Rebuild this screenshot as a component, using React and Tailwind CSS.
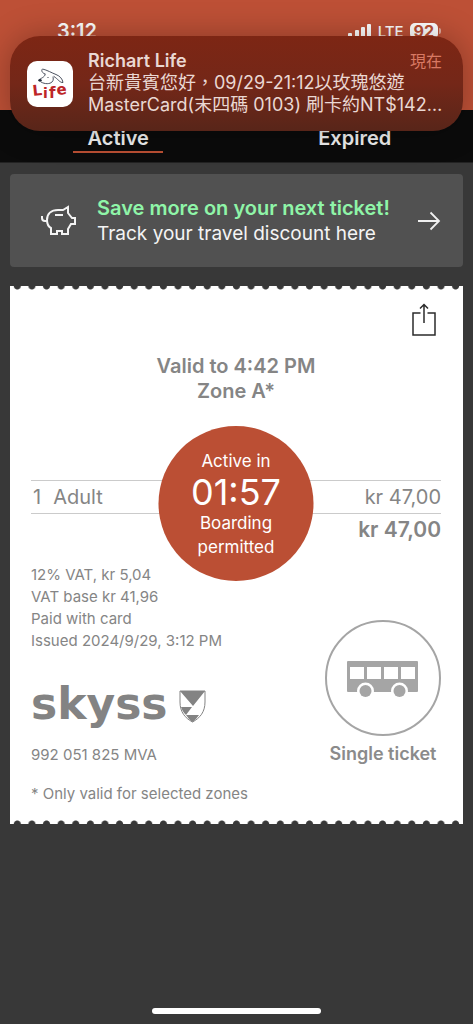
import React from "react";

function StatusBar() {
  return (
    <div className="flex h-full items-start justify-between pt-[21px] pr-[32px] pl-[57px] text-white">
      <span className="text-[20px] leading-[20px] font-semibold">3:12</span>
      <div className="flex items-start gap-[6px]">
        <svg className="mt-[3px]" width="24" height="15" viewBox="0 0 24 15" fill="currentColor" aria-hidden="true">
          <rect x="0" y="9" width="4" height="6" rx="1" />
          <rect x="7" y="6" width="4" height="9" rx="1" />
          <rect x="13" y="3" width="4" height="12" rx="1" />
          <rect x="19" y="0" width="4" height="15" rx="1" />
        </svg>
        <span className="text-[15px] leading-[22px] font-medium">LTE</span>
        <div className="flex items-center gap-px">
          <span className="mt-[2px] rounded-[5px] bg-white px-[4px] text-[16px] leading-[16px] font-bold text-[#bb4f34]">92</span>
          <span className="mt-[2px] h-[6px] w-[2px] rounded-r bg-white/50" />
        </div>
      </div>
    </div>
  );
}

function RichartIcon() {
  return (
    <svg width="46" height="46" viewBox="0 0 46 46" className="shrink-0" role="img" aria-label="Richart Life">
      <rect width="46" height="46" rx="10" fill="#fff" />
      <g fill="none" stroke="#39404f" strokeWidth="0.9" strokeLinecap="round" strokeLinejoin="round">
        <path d="M18 13 C15 12 14 9.500 15.500 8 C20 9 25 12 29 13.500 C33 15 35.500 18 36 21.500 C33 22 31 18 27 15.500" />
        <path d="M18 13 C19 15 15 17 13 18" />
        <path d="M14 21 C18 23.500 23 23 25 21 C27 19 26 17 26 16" />
      </g>
      <circle cx="21" cy="16.500" r="0.600" fill="#222b3a" />
      <ellipse cx="13" cy="19.300" rx="1.700" ry="1.400" fill="#222b3a" />
      <g fill="#bd2528" fontFamily="'DejaVu Sans', sans-serif" fontWeight="700">
        <text x="6" y="35" fontSize="15" transform="rotate(-6 6 35)">L</text>
        <text x="16" y="37" fontSize="14">i</text>
        <text x="22" y="37" fontSize="15">f</text>
        <text x="30" y="34" fontSize="15" transform="rotate(-6 30 34)">e</text>
      </g>
    </svg>
  );
}

function Notification() {
  return (
    <section
      aria-label="Notification"
      className="absolute inset-x-[10px] top-[36px] flex h-[95px] items-center gap-[15px] rounded-[30px] bg-linear-to-b from-[#7d2614] via-[#742718] to-[#582519] pr-[21px] pl-[17px] shadow-[0_0_32px_rgba(0,0,0,0.28)]"
    >
      <RichartIcon />
      <div className="min-w-0 flex-1 pb-[2px] text-[#ead8d3]">
        <div className="flex items-center justify-between leading-[22px]">
          <h2 className="text-[18px] font-semibold">Richart Life</h2>
          <span className="text-[16px] text-[#d87963]">現在</span>
        </div>
        <p className="text-[18px] leading-[22px] whitespace-nowrap">台新貴賓您好，09/29-21:12以玫瑰悠遊</p>
        <p className="text-[18px] leading-[22px] whitespace-nowrap">MasterCard(末四碼 0103) 刷卡約NT$142…</p>
      </div>
    </section>
  );
}

function Tabs() {
  return (
    <nav className="grid h-[53px] grid-cols-2 border-b border-[#222] bg-[#0b0b0b] text-[20px] leading-[24px] font-semibold text-[#f1f1f1]">
      <button className="flex flex-col items-center pt-[16px]">
        Active
        <span className="mt-px h-[2px] w-[90px] bg-[#b94e33]" />
      </button>
      <button className="flex flex-col items-center pt-[16px]">Expired</button>
    </nav>
  );
}

function PiggyBank() {
  return (
    <svg width="36" height="32" viewBox="0 0 36 32" fill="none" stroke="#f4f4f4" strokeWidth="2" strokeLinejoin="miter" aria-hidden="true">
      <path d="M1 11 V13 Q1 16 4 16 H6" />
      <path d="M22 5 H17 C10 5 6 9 6 15 C6 19 8 22 10 23 V29 H16 V26 H21 V29 H27 V24 L30 19 H34 V13 H31 L27 8 V2 L22 5 Z" />
      <path d="M14 10 H22" />
    </svg>
  );
}

function DiscountBanner() {
  return (
    <a href="#discount" className="mx-[10px] mt-[11px] flex h-[93px] items-center rounded-[4px] bg-[#515151] pr-[22px] pl-[31px]">
      <PiggyBank />
      <div className="ml-[20px] flex-1 leading-[25px] whitespace-nowrap">
        <div className="text-[20px] font-semibold text-[#8ff5a8]">Save more on your next ticket!</div>
        <div className="text-[19px] text-[#f4f4f4]">Track your travel discount here</div>
      </div>
      <svg width="24" height="20" viewBox="0 0 24 20" fill="none" stroke="#f0f0f0" strokeWidth="1.800" aria-hidden="true">
        <path d="M1 10 H22 M13.500 1.500 L22 10 L13.500 18.500" />
      </svg>
    </a>
  );
}

function ShareIcon() {
  return (
    <svg width="24" height="34" viewBox="0 0 24 34" fill="none" stroke="#2b2b2b" strokeWidth="1.500" aria-hidden="true">
      <path d="M8.500 10 H1 V32 H23 V10 H15.500" />
      <path d="M12 20 V1.500 M8 5.500 L12 1.500 L16 5.500" />
    </svg>
  );
}

function Countdown() {
  return (
    <div className="absolute top-[-54px] left-1/2 flex size-[155px] -translate-x-1/2 flex-col items-center justify-center rounded-full bg-[#bb4f34] text-center text-[17px] leading-[24px] text-white">
      <span>Active in</span>
      <span className="text-[36px] leading-[38px]">01:57</span>
      <span>Boarding</span>
      <span>permitted</span>
    </div>
  );
}

function FareTable() {
  return (
    <div className="relative mt-[76px]">
      <table className="w-full text-[20px] leading-[32px] text-[#858585]">
        <tbody>
          <tr className="border-y border-[#cbcbcb]">
            <td className="pl-[2px]">
              <span className="mr-[12px]">1</span>Adult
            </td>
            <td className="text-right">kr 47,00</td>
          </tr>
          <tr className="font-semibold">
            <td />
            <td className="text-right text-[21px]">kr 47,00</td>
          </tr>
        </tbody>
      </table>
      <Countdown />
    </div>
  );
}

function SkyssLogo() {
  return (
    <div className="flex items-center gap-[11px] text-[#838383]">
      <span className="font-['DejaVu_Sans',sans-serif] text-[44px] leading-[52px] font-bold">skyss</span>
      <svg className="mt-[5px]" width="27" height="33" viewBox="0 0 27 33" aria-hidden="true">
        <path d="M1 1 H26 V12 C26 22 21 28 13.500 32 C6 28 1 22 1 12 Z" fill="#fff" stroke="currentColor" strokeWidth="1" />
        <path d="M1 1 H26 L14 16 Z M2 17 H13 L7 25 C4 22 3 20 2 17 Z M7 25 H20 C18 28 16 30 13.500 32 C11 30 9 28 7 25 Z" fill="currentColor" />
      </svg>
    </div>
  );
}

function BusBadge() {
  return (
    <div className="flex w-[116px] flex-col items-center pt-[56px]">
      <div className="flex size-[116px] items-center justify-center rounded-full border-2 border-[#a5a5a5]">
        <svg className="mt-[4px]" width="72" height="38" viewBox="0 0 72 38" aria-hidden="true">
          <path d="M1 0 H70 Q71 0 71 1 V30 Q71 31 70 31 H1 Q0 31 0 30 V1 Q0 0 1 0 Z" fill="#a5a5a5" />
          <path d="M3 6 H17 V18 H3 Z M20 6 H34 V18 H20 Z M37 6 H51 V18 H37 Z M54 6 H68 V18 H54 Z" fill="#fff" />
          <circle cx="18.500" cy="30" r="8.500" fill="#fff" />
          <circle cx="52.500" cy="30" r="8.500" fill="#fff" />
          <circle cx="18.500" cy="30" r="6" fill="#a5a5a5" />
          <circle cx="52.500" cy="30" r="6" fill="#a5a5a5" />
        </svg>
      </div>
      <span className="mt-[7px] text-[18px] leading-[22px] font-semibold whitespace-nowrap text-[#8b8b8b]">Single ticket</span>
    </div>
  );
}

function Ticket() {
  return (
    <article className="mx-[10px] mt-[19px] bg-white">
      <div className="h-[4px] bg-[radial-gradient(circle_at_50%_0,#383838_3px,transparent_4px)] bg-[length:calc(100%/31)_100%]" />
      <div className="pt-[13px] pr-[22px] pb-[15px] pl-[21px]">
        <div className="flex justify-end pr-[5px]">
          <button aria-label="Share ticket">
            <ShareIcon />
          </button>
        </div>
        <h1 className="mt-[17px] text-center text-[20px] leading-[25px] font-semibold text-[#858585]">
          Valid to 4:42 PM
          <br />
          Zone A*
        </h1>
        <FareTable />
        <div className="mt-[18px] flex justify-between text-[15px] leading-[22px] text-[#858585]">
          <div>
            <p>12% VAT, kr 5,04</p>
            <p>VAT base kr 41,96</p>
            <p>Paid with card</p>
            <p className="mb-[26px]">Issued 2024/9/29, 3:12 PM</p>
            <SkyssLogo />
            <p className="mt-[14px]">992 051 825 MVA</p>
            <p className="mt-[17px]">* Only valid for selected zones</p>
          </div>
          <BusBadge />
        </div>
      </div>
      <div className="h-[4px] bg-[radial-gradient(circle_at_50%_100%,#383838_3px,transparent_4px)] bg-[length:calc(100%/31)_100%]" />
    </article>
  );
}

export default function App() {
  return (
    <div className="relative flex min-h-screen flex-col bg-[#383838] font-[Inter,'Noto_Sans_CJK_TC',sans-serif]">
      <header className="h-[110px] bg-[#bd5036]">
        <StatusBar />
      </header>
      <Tabs />
      <Notification />
      <main>
        <DiscountBanner />
        <Ticket />
      </main>
      <div className="mx-auto mt-auto mb-[10px] h-[6px] w-[169px] rounded-full bg-white" />
    </div>
  );
}
